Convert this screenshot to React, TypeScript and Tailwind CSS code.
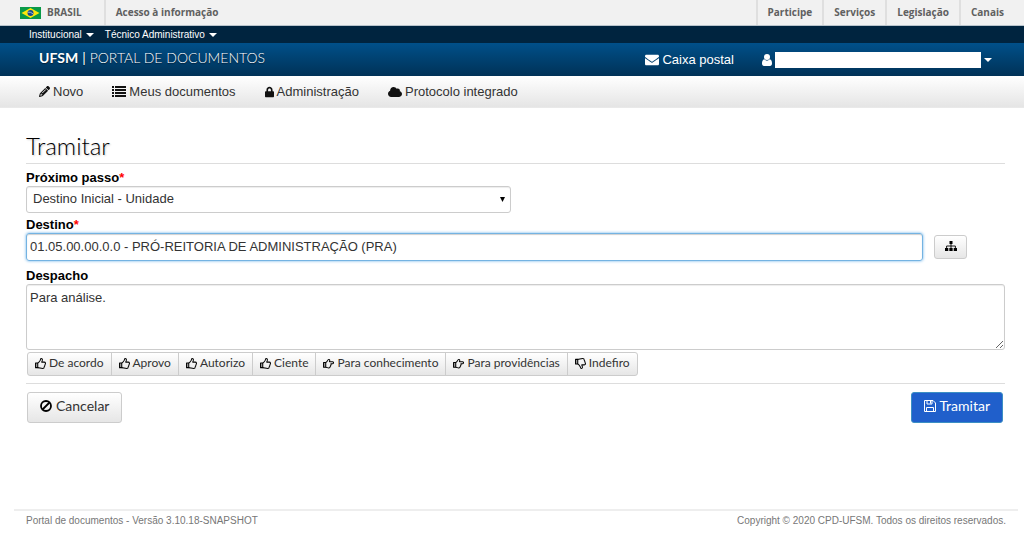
import React, { useState } from "react";
import { FaCloud, FaEnvelope, FaLock } from "react-icons/fa";
import { FaPencil } from "react-icons/fa6";

const govLinks = ["Participe", "Serviços", "Legislação", "Canais"];

type IconProps = { className?: string };

function ListIcon({ className }: IconProps) {
  return (
    <svg viewBox="0 0 14 12" className={className} fill="currentColor" aria-hidden="true">
      <path d="M0 0h2v2H0zM3 0h11v2H3zM0 3h2v2H0zM3 3h11v2H3zM0 6h2v2H0zM3 6h11v2H3zM0 9h2v2H0zM3 9h11v2H3z" />
    </svg>
  );
}

function UserIcon({ className }: IconProps) {
  return (
    <svg viewBox="0 0 10 12" className={className} fill="currentColor" aria-hidden="true">
      <circle cx="5" cy="3" r="3" />
      <path d="M2.300 5.300Q5 8 7.700 5.300C9.500 5.700 10 7.500 10 9.500 10 11 9.200 12 8 12H2C.8 12 0 11 0 9.500 0 7.500.5 5.700 2.300 5.300z" />
    </svg>
  );
}

function ThumbUpIcon({ className }: IconProps) {
  return (
    <svg viewBox="0 0 12 12" className={className} fill="none" stroke="currentColor" strokeWidth="1.100" strokeLinejoin="round" aria-hidden="true">
      <path d="M.6 5.500H3v5H.6z" fill="currentColor" fillOpacity=".35" />
      <path d="M3 5.500C4.500 5 5 3.500 5.600 2.700 6 2 6 .6 6.600.6 8 .6 8.200 1.500 8 2.600L7.300 4.500h2.700c1.700 0 1.700 1.500 1 2.100.2.600 0 1.200-.4 1.500.1.600-.1 1.100-.5 1.400 0 1.200-.5 1.900-1.700 1.900C6 11.400 5 10.600 3 10.500" />
    </svg>
  );
}

function ThumbDownIcon({ className }: IconProps) {
  return <ThumbUpIcon className={`${className} -scale-y-100`} />;
}

function HandRightIcon({ className }: IconProps) {
  return (
    <svg viewBox="0 0 12 11" className={className} fill="none" stroke="currentColor" strokeWidth="1.100" strokeLinejoin="round" aria-hidden="true">
      <path d="M.6 4.500H3v5H.6z" fill="currentColor" fillOpacity=".35" />
      <path d="M3 4.500C4.500 4 4.800 2.300 5.600 1.400 6.500.4 8 1.400 7 3.500h3.200c1.700 0 1.700 2.200 0 2.200H8.600c.4.700.2 1.400-.3 1.700.2.700 0 1.300-.5 1.500 0 1-.6 1.500-1.600 1.500C4.800 10.400 4.500 9.500 3 9.500" />
    </svg>
  );
}

function BanIcon({ className }: IconProps) {
  return (
    <svg viewBox="0 0 12 12" className={className} fill="none" stroke="currentColor" strokeWidth="1.8" aria-hidden="true">
      <circle cx="6" cy="6" r="5" />
      <path d="M2.500 9.500l7-7" />
    </svg>
  );
}

function SaveIcon({ className }: IconProps) {
  return (
    <svg viewBox="0 0 12 12" className={className} fill="none" stroke="currentColor" aria-hidden="true">
      <path d="M.5.5h8.500L11.500 3v8.500H.5zM3 .5v3.500h5V.5M6.500 1v2.500M2.500 11.500v-4h7v4" />
    </svg>
  );
}

function SitemapIcon({ className }: IconProps) {
  return (
    <svg viewBox="0 0 12 10" className={className} fill="currentColor" aria-hidden="true">
      <path d="M4.500 0h3v3h-3zM0 7h3.300v3H0zM4.350 7h3.300v3h-3.300zM8.700 7H12v3H8.700z" />
      <path d="M6 3v4M1.600 7V5h8.800v2" fill="none" stroke="currentColor" strokeWidth=".9" />
    </svg>
  );
}

const navItems = [
  { label: "Novo", icon: FaPencil, size: "w-[11px] h-[11px]" },
  { label: "Meus documentos", icon: ListIcon, size: "w-3.5 h-3" },
  { label: "Administração", icon: FaLock, size: "w-[9px] h-3" },
  { label: "Protocolo integrado", icon: FaCloud, size: "w-3.5 h-3.5" },
];

const quickReplies = [
  { label: "De acordo", icon: ThumbUpIcon },
  { label: "Aprovo", icon: ThumbUpIcon },
  { label: "Autorizo", icon: ThumbUpIcon },
  { label: "Ciente", icon: ThumbUpIcon },
  { label: "Para conhecimento", icon: HandRightIcon },
  { label: "Para providências", icon: HandRightIcon },
  { label: "Indefiro", icon: ThumbDownIcon },
];

function Caret() {
  return (
    <svg viewBox="0 0 8 4" className="w-2 h-1 fill-current shrink-0" aria-hidden="true">
      <path d="M0 0h8L4 4z" />
    </svg>
  );
}

function BrazilFlag() {
  return (
    <svg viewBox="0 0 21 12" className="w-[21px] h-3 shrink-0" aria-hidden="true">
      <rect width="21" height="12" fill="#0a9a48" />
      <path d="M10.5 1 19.5 6l-9 5-9-5z" fill="#fde80b" />
      <circle cx="10.5" cy="6" r="3" fill="#1d4a8d" />
      <path d="M7.8 5.2q3-.6 5.4 1.8" stroke="#d6e4ee" strokeWidth=".7" fill="none" />
    </svg>
  );
}

export default function App() {
  const [step, setStep] = useState("inicial");
  const [destination, setDestination] = useState("01.05.00.00.0.0 - PRÓ-REITORIA DE ADMINISTRAÇÃO (PRA)");
  const [note, setNote] = useState("Para análise.");

  return (
    <div className="min-h-screen flex flex-col bg-white font-['Liberation_Sans',Arial,sans-serif] text-[13px] text-[#333]">
      {/* Government bar */}
      <div className="h-[26px] flex items-stretch justify-between bg-[#f1f1f1] border-b border-[#b9c4cc] font-['Open_Sans',sans-serif] text-[10px] font-bold text-[#606060]">
        <div className="flex">
          <a href="#" className="flex items-center gap-1.5 pl-5 pr-[22px] border-r-2 border-[#dfdfdf]">
            <BrazilFlag />
            BRASIL
          </a>
          <a href="#" className="flex items-center px-2.5">Acesso à informação</a>
        </div>
        <div className="flex pr-2.5">
          {govLinks.map((link) => (
            <a key={link} href="#" className="flex items-center px-2.5 border-l-2 border-[#dfdfdf]">
              {link}
            </a>
          ))}
        </div>
      </div>

      {/* Institution bar */}
      <div className="h-[17px] flex items-center gap-[11px] pl-[29px] bg-[#00243f] text-[10px] text-white">
        <button className="flex items-center gap-1">Institucional <Caret /></button>
        <button className="flex items-center gap-1">Técnico Administrativo <Caret /></button>
      </div>

      <header className="h-[33px] flex items-center justify-between pl-[39px] pr-8 bg-gradient-to-b from-[#00508a] to-[#003257] text-white">
        <a href="#" className="pb-1 font-[Lato,sans-serif] text-sm [text-shadow:0_1px_1px_#00203a]">
          <b>UFSM</b>
          <span className="mx-1">|</span>
          <span className="font-light">PORTAL DE DOCUMENTOS</span>
        </a>
        <div className="flex items-center">
          <a href="#" className="flex items-center gap-[3px] mr-7">
            <FaEnvelope className="w-3.5 h-3.5" />
            Caixa postal
          </a>
          <button className="flex items-center gap-[3px]" aria-label="Usuário">
            <UserIcon className="w-2.5 h-3" />
            <span className="w-[206px] h-4 bg-white" />
            <Caret />
          </button>
        </div>
      </header>

      <nav className="h-8 flex items-center gap-[29px] pl-[39px] bg-gradient-to-b from-white to-[#e5e5e5] border-b border-[#e9e9e9]">
        {navItems.map(({ label, icon: Icon, size }) => (
          <a key={label} href="#" className="flex items-center gap-[3px]">
            <Icon className={`${size} text-[#111]`} />
            {label}
          </a>
        ))}
      </nav>

      <main className="grow pl-[26px] pr-[19px]">
        <h1 className="mt-6 h-8 border-b border-[#ddd] font-[Lato,sans-serif] font-light text-2xl leading-7 text-black [text-shadow:1px_1px_2px_#ccc]">
          Tramitar
        </h1>

        <form onSubmit={(e) => e.preventDefault()}>
          <label htmlFor="step" className="block mt-1.5 leading-4 font-bold text-black">
            Próximo passo<span className="text-[#f00]">*</span>
          </label>
          <div className="relative w-1/2 max-w-[485px]">
            <select
              id="step"
              value={step}
              onChange={(e) => setStep(e.target.value)}
              className="block w-full h-[27px] px-1.5 pb-0.5 appearance-none rounded-[3px] border border-[#ccc] shadow-[inset_0_1px_1px_#00000013] bg-white"
            >
              <option value="inicial">Destino Inicial - Unidade</option>
            </select>
            <svg viewBox="0 0 5 5" className="absolute right-1.5 top-[11px] w-[5px] h-[5px] pointer-events-none" aria-hidden="true">
              <path d="M0 0h5L2.500 5z" />
            </svg>
          </div>

          <label htmlFor="destination" className="block mt-1 leading-4 font-bold text-black">
            Destino<span className="text-[#f00]">*</span>
          </label>
          <div className="flex items-center gap-[11px] pr-[38px]">
            <input
              id="destination"
              type="text"
              autoFocus
              onFocus={(e) => e.target.setSelectionRange(destination.length, destination.length)}
              value={destination}
              onChange={(e) => setDestination(e.target.value)}
              className="grow h-7 px-[3px] pb-0.5 rounded-[3px] border border-[#74b3e2] outline-none shadow-[inset_0_1px_1px_#00000030,0_0_3px_#66afe9]"
            />
            <button
              type="button"
              aria-label="Selecionar unidade"
              className="w-[33px] h-6 flex items-center justify-center pb-0.5 rounded-[3px] border border-[#ccc] bg-gradient-to-b from-white to-[#e6e6e6] text-black"
            >
              <SitemapIcon className="w-3 h-2.5" />
            </button>
          </div>

          <label htmlFor="note" className="block mt-[7px] leading-4 font-bold text-black">Despacho</label>
          <textarea
            id="note"
            value={note}
            onChange={(e) => setNote(e.target.value)}
            className="block w-full h-[66px] px-[3px] py-[5px] leading-4 rounded-[3px] border border-[#ccc] shadow-[inset_0_1px_1px_#00000013]"
          />

          <div className="flex mt-0.5 ml-px font-[Lato,sans-serif] text-xs">
            {quickReplies.map(({ label, icon: Icon }) => (
              <button
                key={label}
                type="button"
                className="h-6 flex items-center gap-[3px] px-[7px] pb-0.5 -ml-px first:ml-0 border border-[#ccc] first:rounded-l-[3px] last:rounded-r-[3px] bg-gradient-to-b from-white to-[#e6e6e6]"
              >
                <Icon className="w-[11px] h-[11px] text-black" />
                {label}
              </button>
            ))}
          </div>

          <div className="flex justify-between mt-[7px] pt-2 pl-px pr-0.5 border-t border-[#ddd] font-[Lato,sans-serif] text-sm">
            <button type="button" className="h-[31px] flex items-center gap-1 px-3 pb-1 rounded-[3px] border border-[#ccc] bg-gradient-to-b from-white to-[#e6e6e6]">
              <BanIcon className="w-3 h-3 text-black" />
              Cancelar
            </button>
            <button type="submit" className="h-[31px] flex items-center gap-[3px] px-3 pb-1 rounded-[3px] border border-[#3b8fc4] bg-[#205fcb] text-white">
              <SaveIcon className="w-3 h-3" />
              Tramitar
            </button>
          </div>
        </form>
      </main>

      <footer className="ml-3.5 mr-1.5 mb-2 px-3 pt-0.5 flex justify-between border-t-2 border-[#eee] text-[10px] leading-4 text-[#777]">
        <span>Portal de documentos - Versão 3.10.18-SNAPSHOT</span>
        <span>Copyright © 2020 CPD-UFSM. Todos os direitos reservados.</span>
      </footer>
    </div>
  );
}
